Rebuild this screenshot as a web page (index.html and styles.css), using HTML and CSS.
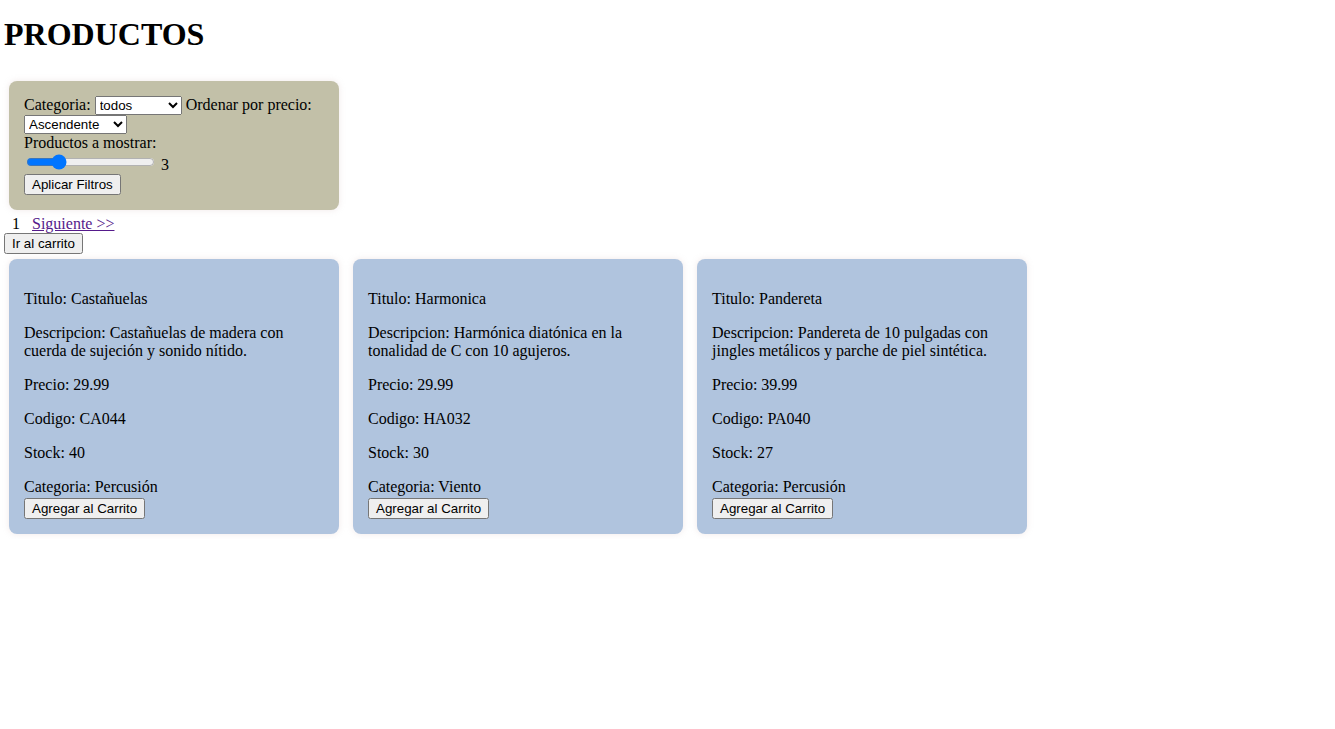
FILE: index.html
```html
<!DOCTYPE html>
<html lang="es">
<head>
<meta charset="utf-8">
<title>Productos</title>
<link rel="stylesheet" href="styles.css">
</head>
<body>
<h1 class="title">PRODUCTOS</h1>
<div class="filters">
  <label>Categoria:</label>
  <select class="sel-cat">
    <option>todos</option>
    <option>Percusión</option>
    <option>Viento</option>
  </select>
  <label>Ordenar por precio:</label>
  <select class="sel-order">
    <option>Ascendente</option>
    <option>Descendente</option>
  </select>
  <br>
  <label>Productos a mostrar:</label>
  <br>
  <input class="range" type="range" min="1" max="10" value="3"> <span>3</span>
  <br>
  <button class="btn">Aplicar Filtros</button>
</div>
<div class="pagination"><span class="page">1</span><a class="next" href="#">Siguiente &gt;&gt;</a></div>
<button class="btn">Ir al carrito</button>
<div class="cards">
  <div class="card">
    <p>Titulo: Castañuelas</p>
    <p>Descripcion: Castañuelas de madera con cuerda de sujeción y sonido nítido.</p>
    <p>Precio: 29.99</p>
    <p>Codigo: CA044</p>
    <p>Stock: 40</p>
    Categoria: Percusión<br>
    <button class="btn btn-add">Agregar al Carrito</button>
  </div>
  <div class="card">
    <p>Titulo: Harmonica</p>
    <p>Descripcion: Harmónica diatónica en la tonalidad de C con 10 agujeros.</p>
    <p>Precio: 29.99</p>
    <p>Codigo: HA032</p>
    <p>Stock: 30</p>
    Categoria: Viento<br>
    <button class="btn btn-add">Agregar al Carrito</button>
  </div>
  <div class="card">
    <p>Titulo: Pandereta</p>
    <p>Descripcion: Pandereta de 10 pulgadas con jingles metálicos y parche de piel sintética.</p>
    <p>Precio: 39.99</p>
    <p>Codigo: PA040</p>
    <p>Stock: 27</p>
    Categoria: Percusión<br>
    <button class="btn btn-add">Agregar al Carrito</button>
  </div>
</div>
</body>
</html>
```

FILE: styles.css
```css
body {
  margin: 0;
  padding: 0 4px;
  font-family: "Liberation Serif", "Times New Roman", serif;
  font-size: 16px;
  color: #000;
  background: #fff;
}

.title {
  font-size: 32px;
  font-weight: bold;
  margin: 16px 0 28px;
}

.filters {
  width: 300px;
  padding: 15px;
  margin: 5px;
  background: #c2c0a8;
  border-radius: 8px;
  box-shadow: 0 0 6px rgba(200, 170, 170, 0.25);
}

.filters select {
  font-family: "Liberation Sans", Arial, sans-serif;
  font-size: 13.333px;
}

.sel-cat {
  width: 87px;
}

.sel-order {
  width: 103px;
}

.range {
  width: 129px;
  accent-color: #0075ff;
}

.btn {
  font-family: "Liberation Sans", Arial, sans-serif;
  font-size: 13.333px;
}

.btn-add {
  margin-top: 2px;
}

.pagination {
  line-height: 18px;
}

.page {
  margin: 0 7px 0 8px;
}

.next {
  color: #551a8b;
  margin-left: 5px;
}

.cards {
  display: flex;
  align-items: flex-start;
  gap: 14px;
  margin: 5px;
}

.card {
  width: 300px;
  padding: 15px;
  background: #b0c4de;
  border-radius: 8px;
  box-shadow: 0 0 6px rgba(200, 170, 170, 0.25);
}
```
